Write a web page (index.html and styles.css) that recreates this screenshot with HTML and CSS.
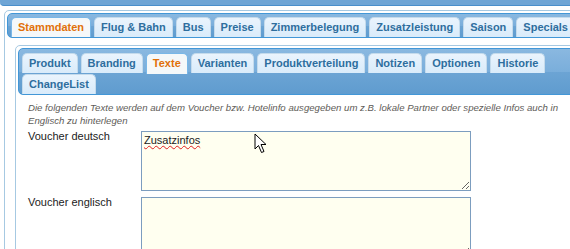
FILE: index.html
```html
<!DOCTYPE html>
<html lang="de">
<head>
    <meta charset="UTF-8">
    <meta name="viewport" content="width=device-width, initial-scale=1.0">
    <title>Produkt bearbeiten</title>
    <link rel="stylesheet" href="styles.css">
</head>
<body>
    <div class="topbar"></div>

    <div class="tabs outer">
        <ul class="tab-nav">
            <li class="active"><a>Stammdaten</a></li>
            <li><a>Flug &amp; Bahn</a></li>
            <li><a>Bus</a></li>
            <li><a>Preise</a></li>
            <li><a>Zimmerbelegung</a></li>
            <li><a>Zusatzleistung</a></li>
            <li><a>Saison</a></li>
            <li><a>Specials</a></li>
            <li><a>Kontingente</a></li>
        </ul>

        <div class="tab-panel">
            <div class="tabs inner">
                <ul class="tab-nav">
                    <li><a>Produkt</a></li>
                    <li><a>Branding</a></li>
                    <li class="active"><a>Texte</a></li>
                    <li><a>Varianten</a></li>
                    <li><a>Produktverteilung</a></li>
                    <li><a>Notizen</a></li>
                    <li><a>Optionen</a></li>
                    <li><a>Historie</a></li>
                    <li><a>ChangeList</a></li>
                </ul>

                <div class="tab-panel">
                    <p class="hint">Die folgenden Texte werden auf dem Voucher bzw. Hotelinfo ausgegeben um z.B. lokale Partner oder spezielle Infos auch in Englisch zu hinterlegen</p>

                    <div class="field">
                        <label for="voucherDe">Voucher deutsch</label>
                        <textarea id="voucherDe" class="misspelled">Zusatzinfos</textarea>
                    </div>

                    <div class="field">
                        <label for="voucherEn">Voucher englisch</label>
                        <textarea id="voucherEn"></textarea>
                    </div>
                </div>
            </div>
        </div>
    </div>

    <svg class="mouse" width="14" height="21" viewBox="0 0 14 21">
        <path d="M1 1 L1 16 L4.5 12.5 L7.5 19.5 L10 18.5 L7 11.5 L12 11.5 Z" fill="#fff" stroke="#000" stroke-width="1" stroke-linejoin="round"/>
    </svg>
</body>
</html>
```

FILE: styles.css
```css
body {
    font-family: "Liberation Sans", Arial, sans-serif;
    background-color: #fff;
    margin: 0;
    padding: 0;
    overflow: hidden;
    position: relative;
}

.topbar {
    height: 5px;
    background-color: #6fa5d5;
    border-bottom: 1px solid #4a8fcb;
    border-bottom-left-radius: 4px;
}

.tabs {
    border: 1px solid #a6c9e2;
    border-radius: 5px;
    padding: 2px;
    background-color: #fff;
}

.outer {
    margin: 4px 0 0 4px;
    width: 640px;
}

.inner {
    width: 576px;
}

.tab-nav {
    list-style: none;
    margin: 0;
    padding: 2px 3px 0;
    display: flex;
    flex-wrap: wrap;
    border: 1px solid #4297d7;
    border-radius: 5px;
    background: linear-gradient(to bottom, #8ab8e0 0%, #7aaedb 50%, #6ca4d4 51%, #5f9ccf 100%);
}

.outer > .tab-nav {
    flex-wrap: nowrap;
    overflow: hidden;
}

.inner > .tab-nav {
    padding-top: 3px;
}

.tab-nav li {
    margin: 1px 3px 0 0;
    border: 1px solid #c5dbec;
    border-bottom: none;
    border-radius: 5px 5px 0 0;
    background: linear-gradient(to bottom, #eaf4fd, #d9ebfa);
    white-space: nowrap;
    flex-shrink: 0;
}

.tab-nav li a {
    display: block;
    padding: 0 6px;
    height: 19px;
    line-height: 19px;
    font-size: 11px;
    font-weight: bold;
    color: #2e6e9e;
}

.tab-nav li.active {
    background: #f5f8f9;
    border-color: #79b7e7;
    margin-bottom: -1px;
    padding-bottom: 1px;
}

.tab-nav li.active a {
    color: #e17009;
}

.outer > .tab-panel {
    padding: 7px 8px;
}

.inner > .tab-panel {
    padding: 6px 10px;
}

.hint {
    margin: 0 0 4px;
    max-width: 545px;
    font-size: 9.65px;
    line-height: 13px;
    font-style: italic;
    color: #605c58;
}

.field {
    display: grid;
    grid-template-columns: 113px 330px;
    margin-bottom: 6px;
}

.field label {
    font-size: 11px;
    line-height: 11px;
    color: #222;
}

textarea {
    box-sizing: border-box;
    width: 330px;
    height: 60px;
    margin: 0;
    padding: 2px;
    border: 1px solid #7c9dbf;
    background-color: #fffff0;
    font-family: "Liberation Sans", Arial, sans-serif;
    font-size: 11px;
    color: #222;
    display: block;
}

.misspelled {
    text-decoration: underline wavy #e02020;
    text-decoration-thickness: 1px;
}

.mouse {
    position: absolute;
    left: 254px;
    top: 133px;
}
```
